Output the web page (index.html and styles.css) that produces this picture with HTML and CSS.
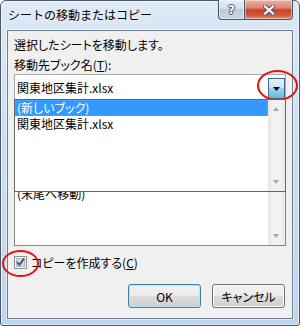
FILE: index.html
```html
<!DOCTYPE html>
<html lang="ja">
<head>
    <meta charset="UTF-8">
    <meta name="viewport" content="width=device-width, initial-scale=1.0">
    <title>シートの移動またはコピー</title>
    <link rel="stylesheet" href="styles.css">
</head>
<body>
    <div class="window">
        <div class="titlebar">
            <span class="title">シートの移動またはコピー</span>
            <div class="caption-buttons">
                <span class="cap-btn help">?</span>
                <span class="cap-btn close">
                    <svg width="12" height="10" viewBox="0 0 12 10">
                        <path d="M2 1.5L10 8.5M10 1.5L2 8.5" stroke="#4a5464" stroke-width="4" stroke-linecap="square"/>
                        <path d="M2 1.5L10 8.5M10 1.5L2 8.5" stroke="#fff" stroke-width="2.2" stroke-linecap="square"/>
                    </svg>
                </span>
            </div>
        </div>

        <div class="client">
            <p class="msg">選択したシートを移動します。</p>
            <p class="label">移動先ブック名(<u>T</u>):</p>

            <div class="combo">
                <span class="combo-text">関東地区集計.xlsx</span>
                <span class="combo-btn">
                    <svg width="7" height="4" viewBox="0 0 7 4"><path d="M0 0H7L3.5 4Z" fill="#000"/></svg>
                </span>
                <!-- open drop-down list -->
                <div class="dropdown">
                    <ul class="items">
                        <li class="selected">(新しいブック)</li>
                        <li>関東地区集計.xlsx</li>
                    </ul>
                    <div class="scrollbar">
                        <span class="arrow up"></span>
                        <span class="arrow down"></span>
                    </div>
                </div>
            </div>

            <!-- sheet list, mostly hidden behind the open drop-down -->
            <div class="listbox">
                <ul class="items">
                    <li>(末尾へ移動)</li>
                </ul>
                <div class="scrollbar">
                    <span class="arrow up"></span>
                    <span class="arrow down"></span>
                </div>
            </div>

            <label class="check-row">
                <svg class="checkbox" width="13" height="13" viewBox="0 0 13 13">
                    <rect x="0.5" y="0.5" width="12" height="12" fill="#f6f6f6" stroke="#8f8f8f"/>
                    <rect x="2.5" y="2.5" width="8" height="8" fill="#d6d8dc" stroke="#b0b3b8"/>
                    <path d="M3.2 6.2L5.4 8.8L10 2.6" fill="none" stroke="#3b5088" stroke-width="1.8"/>
                </svg>
                <span>コピーを作成する(<u>C</u>)</span>
            </label>

            <div class="buttons">
                <button class="btn default">OK</button>
                <button class="btn">キャンセル</button>
            </div>
        </div>

        <!-- red annotation marks -->
        <div class="mark mark-combo"></div>
        <div class="mark mark-check"></div>
    </div>
</body>
</html>
```

FILE: styles.css
```css
* {
    box-sizing: border-box;
}
body {
    margin: 0;
    width: 300px;
    height: 326px;
    overflow: hidden;
    background: #fff;
    font-family: "Noto Sans CJK JP", "Noto Sans", sans-serif;
    font-size: 12px;
    color: #000;
}
.window {
    position: relative;
    width: 300px;
    height: 326px;
    display: flex;
    flex-direction: column;
    border: 1px solid #4b5868;
    border-radius: 6px 6px 3px 3px;
    background: linear-gradient(#dde9f6, #cddff2 40%, #bed5ee);
    box-shadow: inset 0 0 0 1px rgba(255, 255, 255, 0.6);
}
.titlebar {
    height: 29px;
    display: flex;
    justify-content: space-between;
    align-items: flex-start;
    padding: 0 6px 0 7px;
}
.title {
    padding-top: 6px;
    line-height: 16px;
    text-shadow: 0 0 6px #fff;
}
.caption-buttons {
    display: flex;
    margin-top: -1px;
}
.cap-btn {
    height: 20px;
    border: 1px solid #4a5565;
    border-top: none;
    display: flex;
    align-items: center;
    justify-content: center;
    box-shadow: inset 0 0 0 1px rgba(255, 255, 255, 0.45);
}
.help {
    width: 27px;
    border-radius: 0 0 0 4px;
    background: linear-gradient(#e6edf6, #d3dfeb 45%, #b9cadc 50%, #c8d8e9);
    color: #fff;
    font-family: "DejaVu Sans", sans-serif;
    font-weight: bold;
    font-size: 12px;
    text-shadow: 1px 0 0 #4a5464, -1px 0 0 #4a5464, 0 1px 0 #4a5464, 0 -1px 0 #4a5464;
}
.close {
    width: 48px;
    border-left: none;
    border-radius: 0 0 4px 0;
    background: linear-gradient(#eab0a3, #dc8672 42%, #c6432b 52%, #d0583f 80%, #e48d70);
}
.client {
    flex: 1;
    margin: 0 6px 6px;
    padding: 0 6px;
    border: 1px solid #6f7f93;
    background: #f0f0f0;
    display: flex;
    flex-direction: column;
    box-shadow: 0 0 0 1px rgba(255, 255, 255, 0.5);
}
.msg,
.label,
.check-row,
.btn,
.items li {
    font-feature-settings: "palt";
}
.msg {
    margin: 6px 0 0;
    line-height: 15px;
}
.label {
    margin: 5px 0 0;
    line-height: 15px;
}
.combo {
    position: relative;
    margin-top: 2px;
    height: 26px;
    display: flex;
    border: 1px solid #a5acb5;
    background: #fff;
}
.combo-text {
    flex: 1;
    padding: 5px 0 0 2px;
    line-height: 16px;
}
.combo-btn {
    width: 17px;
    margin-top: 3px;
    border: 1px solid #3c6a8e;
    background: linear-gradient(#e4f3fc, #c6e6f7 45%, #9dd3ef 50%, #6cb5dc);
    display: flex;
    justify-content: center;
    padding-top: 8px;
}
.dropdown {
    position: absolute;
    top: 24px;
    left: -1px;
    right: -1px;
    height: 93px;
    z-index: 2;
    display: flex;
    border: 1px solid #646464;
    background: #fff;
}
.items {
    flex: 1;
    margin: 0;
    padding: 0;
    list-style: none;
}
.items li {
    height: 16px;
    line-height: 16px;
    padding-left: 2px;
    white-space: nowrap;
}
.items li.selected {
    background: #3399ff;
    color: #fff;
    outline: 1px dotted #d88a3a;
    outline-offset: -1px;
}
.scrollbar {
    width: 17px;
    display: flex;
    flex-direction: column;
    justify-content: space-between;
    background: linear-gradient(to right, #e6e6e6, #f2f2f2 30%, #f2f2f2 70%, #e9e9e9);
}
.arrow {
    height: 17px;
    position: relative;
}
.arrow::after {
    content: "";
    position: absolute;
    left: 5px;
    top: 7px;
    border-left: 3.5px solid transparent;
    border-right: 3.5px solid transparent;
}
.arrow.up::after {
    border-bottom: 4px solid #a8a8a8;
}
.arrow.down::after {
    top: 6px;
    border-top: 4px solid #a8a8a8;
}
.listbox {
    margin-top: 21px;
    height: 125px;
    display: flex;
    border: 1px solid #828790;
    background: #fff;
}
.listbox .items {
    padding-top: 64px;
}
.check-row {
    margin-top: 9px;
    height: 15px;
    line-height: 15px;
    display: flex;
    align-items: center;
    gap: 4px;
}
.buttons {
    margin-top: 14px;
    display: flex;
    justify-content: flex-end;
    gap: 11px;
    padding-right: 1px;
}
.btn {
    width: 73px;
    height: 24px;
    padding: 0;
    border: 1px solid #707070;
    border-radius: 3px;
    background: linear-gradient(#f2f2f2, #ebebeb 50%, #dddddd 50%, #cfcfcf);
    box-shadow: inset 0 0 0 1px #fbfbfb;
    font-family: inherit;
    font-size: 12px;
    color: #000;
}
.btn.default {
    border-color: #3c7fb1;
    box-shadow: inset 0 0 0 1px #bfe4f8;
}
.mark {
    position: absolute;
    border: 2px solid #e3120f;
    border-radius: 50%;
}
.mark-combo {
    left: 256px;
    top: 69px;
    width: 41px;
    height: 31px;
}
.mark-check {
    left: 1px;
    top: 249px;
    width: 37px;
    height: 27px;
}
```
